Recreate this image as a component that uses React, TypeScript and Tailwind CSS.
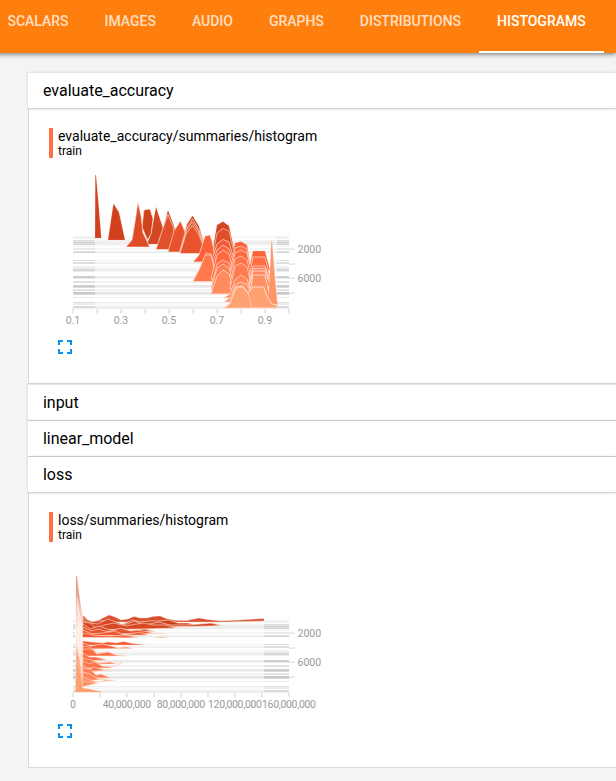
type Ridge = { p: string; f: string; s?: number };

const gridLines: [number, number, string][] = [
  [236.5, 1, '#dcdcdc'], [238, 1, '#eeeeee'], [240, 2, '#dcdcdc'], [242, 1, '#cbcbcb'], [243, 1, '#dddddd'], [244, 1, '#c9c9c9'],
  [246, 1, '#eeeeee'], [248.5, 1, '#cccccc'], [251, 1, '#dddddd'], [252, 1, '#c9c9c9'],
  [260, 1, '#d7d7d7'], [262, 2, '#d8d8d8'], [266.5, 1, '#dddddd'], [268, 1, '#e6e6e6'], [269, 2, '#d1d1d1'], [271, 1, '#e5e5e5'],
  [276, 2, '#c6c6c6'], [278, 1, '#e4e4e4'], [281, 2, '#dcdcdc'], [285, 2, '#c4c4c4'], [287, 1, '#d2d2d2'], [289, 1, '#e4e4e4'],
  [290, 1, '#d6d6d6'], [292, 2, '#bfbfbf'], [294, 1, '#d2d2d2'], [297, 1, '#e6e6e6'], [302, 1, '#d8d8d8'], [303.5, 1, '#d6d6d6'], [306, 2, '#d4d4d4'],
];

const accuracy: Ridge[] = [
  { p: '95,238 95.3,175 96,175 98,198 101.3,238', f: '#d0401c' },
  { p: '108,240 113.5,203.5 119,212.5 125,240', f: '#d0401c' },
  { p: '147,244 151,234 156,207 163,228 167,244', f: '#d54721' },
  { p: '142,227 144,210 150,209 153,219 151,234 147.5,240', f: '#cf431f', s: 0.6 },
  { p: '126,247 132,240 135,222 138,202 141,216 143,233 146,239 149.7,247', f: '#de4c27', s: 0.6 },
  { p: '158,246 163,229 168,210 174,226 180,247', f: '#d24621' },
  { p: '156,249.5 162,231 168,214.5 173,226 178,249.5', f: '#e1502b', s: 0.7 },
  { p: '168,252 174,231 180.5,221 185,232 190,252', f: '#e6532d', s: 0.6 },
  { p: '180,250 187,224 192.5,215.5 199,226 206,250', f: '#d34621', s: 0.4 },
  { p: '180,251 187,228 192.5,219 199,230 206,251', f: '#d84a25', s: 0.7 },
  { p: '180,252 187,229 192.5,222 199,232 206,252', f: '#df4e29', s: 0.7 },
  { p: '180,253.5 186,234 192.5,225 199,235 206,253.5', f: '#e8542e', s: 0.7 },
  { p: '213,248 217,225 223,221.5 229,226 235,254', f: '#d34520' },
  { p: '213,254 217,233 223,228.5 229,231 235,257', f: '#de4f29', s: 0.6 },
  { p: '193,262 199,255 205,236 210,235 212,241 216,262', f: '#fb6038', s: 0.7 },
  { p: '211,263 217,244 223,239.5 229,242 235,263', f: '#ef5a33', s: 0.7 },
  { p: '211,269 217,250 223,245 229,249 236,269', f: '#fb663e', s: 0.7 },
  { p: '193,281 199,270 206,253 211,254 217,281', f: '#ff7044', s: 0.6 },
  { p: '193,281.5 200,268 205,255 211,255 217,281.5', f: '#ff794d', s: 0.6 },
  { p: '211,279 217,255 223,250 229,254 235,279', f: '#ff6a41', s: 0.7 },
  { p: '211,287 217,264 223,260 229,263 236,287', f: '#ff744b', s: 0.7 },
  { p: '211,290 217,268 223,264 229,268 237,290', f: '#ff7f54', s: 0.7 },
  { p: '211,294 217,276 223,270 229,274 236,294', f: '#ff8c60', s: 0.7 },
  { p: '231,265 235,243 241,241.5 247,245 251,267', f: '#ff6038' },
  { p: '230,270 235,248 241,246 247,249 252,274', f: '#ff6840', s: 0.7 },
  { p: '230,275 235,253 241,250 247,253 253,278', f: '#ff6a42', s: 0.7 },
  { p: '230,284 235,259 241,256 247,260 253,284', f: '#ff7147', s: 0.7 },
  { p: '230,289 235,266 241,263 247,267 253,291', f: '#ff7b50', s: 0.7 },
  { p: '224,298 230,294 235,280 241,275 247,279 253,298', f: '#ff875a', s: 0.7 },
  { p: '224,302 231,297 235,285 240,282 247,284 254,302', f: '#ff9265', s: 0.7 },
  { p: '249,270 253,251 265,251 270,270', f: '#ff6338' },
  { p: '249,277 253,257 265,257 270,277', f: '#ff6d43', s: 0.7 },
  { p: '249,282 253,266 265,266 271,282', f: '#ff744b', s: 0.7 },
  { p: '249,284 253,268.5 265,268.5 271,284', f: '#ff8258', s: 0.8 },
  { p: '249,287 253,271 265,271 271,287', f: '#ff855a', s: 0.9 },
  { p: '249,301 253,275 265,275 271,301', f: '#ff9063', s: 0.9 },
  { p: '268,302 270,270 271.3,241 272,241 274.3,270 277.5,304 277,308 270,307', f: '#ff9465', s: 0.3 },
  { p: '224,308 230,303 236,287 243,286 248,293 253,287 264,287 267,296 272,304 277.5,305 277,308', f: '#ffa272', s: 0.9 },
  { p: '224,308 230,304 236,288 242,287 248,293 252,308', f: '#ffa272', s: 0.6 },
];

const loss: Ridge[] = [
  { p: '82,622 83,615.5 88,620 93,621.5 99,620 104,617.5 109,615 115,617 121,620 128,619 134,616.5 140,618 147,618 153,616.5 160,616 166,618.5 176,620.5 187,620.5 199,618 207,619.5 221,621 241,620 256,619 264,618.5 264,621 238,621.5 225,622', f: '#d8512f', s: 0.3 },
  { p: '82,626 83,618 91,622 98,621 105,621 112,622 120,625 126,623 133,620 139,622 149,621 159,621 169,620 178,623 188,623 197,625.5 180,625.5', f: '#cf401b', s: 0.65 },
  { p: '82,627.5 83,620 89,623 98,624 108,619 116,622 124,625 135,621 145,625 159,622 170,625 188,625 211,623 222,625.5 210,626 165,627', f: '#d44520', s: 0.65 },
  { p: '82,630 83,622 90,623 96,628 104,625 114,623 126,626 136,624 144,623 153,625 166,625 176,628 144,629', f: '#d84923', s: 0.6 },
  { p: '82,632 83,624 90,629 99,626 110,630 124,629 133,631 144,629 155,631.5', f: '#e04e29', s: 0.6 },
  { p: '82,634 83,627 91,631 98,629 109,632 120,628 130,631 138,630 153,633 166,633.5', f: '#e8532d', s: 0.6 },
  { p: '82,636 83,630 92,634 102,633 115,631 124,635 140,632 148,635', f: '#ef5933', s: 0.6 },
  { p: '82,637.5 83,633 96,635.5 110,636 125,635 139,637.5', f: '#f35d36', s: 0.5 },
  { p: '118,637.5 127,636 132,637.5', f: '#f35d36' },
  { p: '153,637.5 161,637 168,637.5', f: '#f35d36' },
  { p: '82,645 83,641 91,642 103,643 108,642 116,643 124,641.5 132,643.5 146,645', f: '#f35a34', s: 0.3 },
  { p: '82,649 83,643 91,646 102,644 111,646 118,648 126,647 133,648.5', f: '#f95f38', s: 0.6 },
  { p: '82,653 83,646 90,647 96,652 108,652', f: '#fc653c', s: 0.6 },
  { p: '82,656 83,649 91,649 97,654 108,652 116,655 126,656', f: '#ff6a41', s: 0.6 },
  { p: '82,661 83,653 89,657 96,657 107,660', f: '#ff6b42', s: 0.6 },
  { p: '82,664 83,658 91,660 99,663 110,662 117,664', f: '#ff7147', s: 0.6 },
  { p: '82,668 83,661 89,664 95,662 102,666 113,667 122,662 122,663 109,668', f: '#ff7349', s: 0.6 },
  { p: '82,672 83,665 89,669 94,667 105,670 113,670', f: '#ff784e', s: 0.6 },
  { p: '82,678 83,668 90,669 96,675 101,674 111,678', f: '#ff7e53', s: 0.6 },
  { p: '82,681 83,672 90,674 98,679 111,679', f: '#ff855a', s: 0.6 },
  { p: '82,684 83,677 90,680 98,682 106,680 116,680', f: '#ff8a5f', s: 0.5 },
  { p: '82,687 83,681 90,682 98,683', f: '#ff9064', s: 0.5 },
  { p: '82,692 83,688.5 90,689 97,692', f: '#ffa272', s: 0.4 },
];

function Histogram({ kind }: { kind: 'accuracy' | 'loss' }) {
  const acc = kind === 'accuracy';
  const dy = acc ? 0 : 384;
  const ridges = acc ? accuracy : loss;
  const start = acc ? 95 : 75;
  const end = acc ? 277 : 264;
  const labels: [number, string][] = acc
    ? [[73, '0.1'], [121, '0.3'], [169, '0.5'], [217, '0.7'], [265, '0.9']]
    : [[73, '0'], [127, '40,000,000'], [181, '80,000,000'], [235, '120,000,000'], [289, '160,000,000']];
  const ticks = acc ? [73, 97, 121, 145, 169, 193, 217, 241, 265, 289] : [73, 100, 127, 154, 181, 208, 235, 262, 289];
  return (
    <svg className="block h-[164px] w-[290px]" viewBox={`49 ${165 + dy} 290 164`} fontFamily="Roboto, sans-serif">
      <g transform={`translate(0 ${dy})`}>
        {gridLines.map(([y, h, c]) => (
          <g key={y} fill={c}>
            <rect x="73" y={y} width={start - 73} height={h} opacity={0.85} />
            <rect x={start} y={y} width={end - start} height={h} opacity={0.38} />
            <rect x={end} y={y} width={289 - end} height={h} opacity={0.85} />
          </g>
        ))}
        <rect x="73" y="308" width="216" height="1" fill="#eeeeee" />
        {ticks.map((x) => <rect key={x} x={x - 1} y="308.5" width="2" height="5" fill="#e9e9e9" />)}
        {[249, 264, 278, 293].map((y) => <rect key={y} x="289" y={y - 0.5} width="6" height="1.2" fill="#dddddd" />)}
      </g>
      {ridges.map((r, i) => (
        <polygon key={i} points={r.p} fill={r.f} stroke="#ffe2d5" strokeWidth={r.s ?? 0.15} strokeLinejoin="round" />
      ))}
      {!acc && (
        <g>
          <defs>
            <linearGradient id="front" x1="0" y1="0" x2="0" y2="1">
              <stop offset="0" stopColor="#ec9f8b" />
              <stop offset="0.15" stopColor="#eda18c" />
              <stop offset="0.3" stopColor="#f6c6b8" />
              <stop offset="0.45" stopColor="#ffe5da" />
              <stop offset="0.62" stopColor="#ffe5da" />
              <stop offset="0.78" stopColor="#ffc5aa" />
              <stop offset="1" stopColor="#ff9966" />
            </linearGradient>
          </defs>
          <polygon points="75.7,692 76,576 77,576 79,593 82.5,617 83,692" fill="url(#front)" />
          <path d="M77 598L82 630M77 605L82 640M77 615L82.5 650M77 626L82.5 665M77 636L82.5 677M77 650L82.5 688" fill="none" stroke="#ffffff" strokeWidth="0.6" />
          <polygon points="75.5,692 76.5,645 79.5,660 82.5,688 83,692" fill="#ff9e70" opacity="0.75" />
          <polygon points="76,692 78,670 82,688 90,689.5 103,692" fill="#ffa070" />
        </g>
      )}
      <g fill="#999999" fontSize="10.5" transform={`translate(0 ${dy})`}>
        {labels.map(([x, t]) => <text key={t} x={x} y="324" textAnchor="middle" textLength={t.length === 10 ? 48.5 : t.length === 11 ? 54 : undefined}>{t}</text>)}
        <text x="297.5" y="253">2000</text>
        <text x="297.5" y="282">6000</text>
      </g>
    </svg>
  );
}

function Header({ name }: { name: string }) {
  return (
    <div className="relative flex h-9 items-center border-b border-[#d5d5d5] bg-white pl-[15px] text-base leading-5 tracking-[-0.03px] shadow-[0_0_3px_rgba(0,0,0,0.16)]">
      {name}
    </div>
  );
}

function Panel({ name, kind }: { name: string; kind: 'accuracy' | 'loss' }) {
  return (
    <div className="flex h-[275px] flex-col border-b border-l border-[#d9d9d9] bg-white pt-[19px] pl-5">
      <div className="h-[30px] shrink-0 border-l-4 border-[#ff7043] pl-[5px]">
        <div className="text-[14px] leading-[17px] whitespace-nowrap">{name}</div>
        <div className="text-[12px] leading-3">train</div>
      </div>
      <div className="mt-[7px] shrink-0"><Histogram kind={kind} /></div>
      <svg className="mt-[11px] ml-[9px] block size-[14px] shrink-0" viewBox="0 0 14 14" fill="none" stroke="#0b91ee" strokeWidth="2">
        <path d="M5 1H1V5M9 1H13V5M13 9V13H9M5 13H1V9" />
      </svg>
    </div>
  );
}

export default function App() {
  const tabs = ['SCALARS', 'IMAGES', 'AUDIO', 'GRAPHS', 'DISTRIBUTIONS', 'HISTOGRAMS'];
  return (
    <div className="h-[781px] w-[616px] overflow-hidden bg-[#f4f4f4] font-['Roboto',sans-serif] text-black">
      <nav className="relative -ml-[10.5px] flex h-[53px] bg-[#ff7f0e] text-[14px] leading-[42px] font-medium tracking-[-0.015px] shadow-[0_1px_5px_rgba(0,0,0,0.55)]">
        {tabs.map((t) => (
          <div key={t} className={t === 'HISTOGRAMS' ? 'border-b-2 border-white px-[18px] whitespace-nowrap text-white' : 'px-[18px] whitespace-nowrap text-[#ffdfc2]'}>
            {t}
          </div>
        ))}
      </nav>
      <main className="ml-7 pt-5">
        <Header name="evaluate_accuracy" />
        <Panel name="evaluate_accuracy/summaries/histogram" kind="accuracy" />
        <div className="pt-px">
          <Header name="input" />
          <Header name="linear_model" />
          <Header name="loss" />
        </div>
        <Panel name="loss/summaries/histogram" kind="loss" />
      </main>
    </div>
  );
}
